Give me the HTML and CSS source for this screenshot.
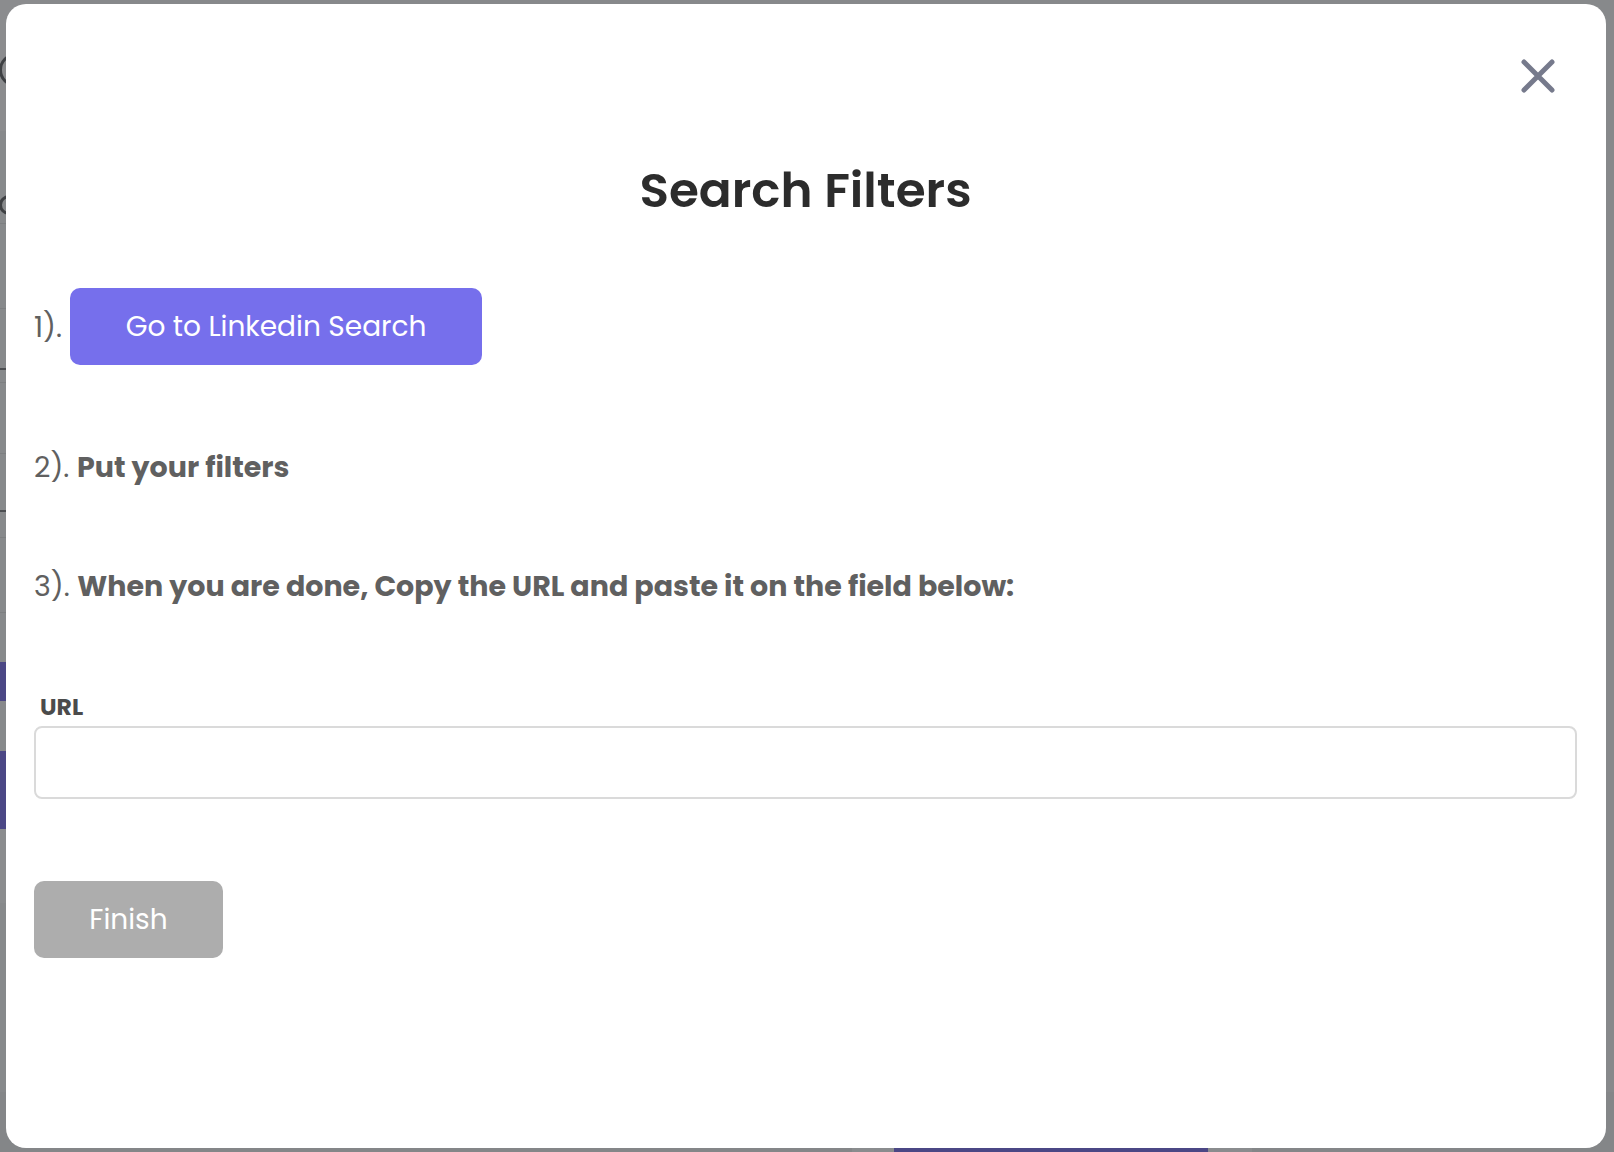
FILE: index.html
```html
<!DOCTYPE html>
<html lang="en">
<head>
    <meta charset="UTF-8">
    <meta name="viewport" content="width=device-width, initial-scale=1.0">
    <title>Search Filters</title>
    <link rel="stylesheet" href="styles.css">
</head>
<body>

    <div class="backdrop">
        <div class="backdrop-main">
            <div class="side-strip">
                <div class="strip-block strip-head"><span class="ring ring-big"></span></div>
                <div class="strip-block strip-b2"><span class="ring ring-small"></span></div>
                <div class="strip-block strip-b3"></div>
                <div class="strip-block strip-b4"></div>
                <div class="strip-block strip-b5"></div>
                <div class="strip-block strip-b6"></div>
                <div class="strip-block strip-b7"></div>
                <div class="strip-block strip-b8"></div>
                <div class="strip-block strip-b9"></div>
                <div class="strip-block strip-b9b"></div>
                <div class="strip-block strip-purple strip-p1"></div>
                <div class="strip-block strip-b10"></div>
                <div class="strip-block strip-purple strip-p2"></div>
                <div class="strip-block strip-b11"></div>
            </div>
        </div>
        <div class="backdrop-footer">
            <div class="footer-wrap"><div class="footer-btn"></div></div>
        </div>
    </div>

    <div class="modal">
        <button type="button" class="modal-close" aria-label="Close">
            <svg width="34" height="34" viewBox="0 0 34 34">
                <path d="M3 3 L31 31 M31 3 L3 31" stroke="#767a8c" stroke-width="5" stroke-linecap="round" fill="none"/>
            </svg>
        </button>

        <h2 class="modal-title">Search Filters</h2>

        <div class="step step-first">
            <span class="step-num">1).</span>
            <a class="btn btn-primary" href="#">Go to Linkedin Search</a>
        </div>

        <p class="step step-second"><span class="step-num">2).</span> <strong>Put your filters</strong></p>

        <p class="step step-third"><span class="step-num">3).</span> <strong>When you are done, Copy the URL and paste it on the field below:</strong></p>

        <label class="field-label" for="url">URL</label>
        <input class="field-input" type="text" id="url">

        <button type="button" class="btn btn-disabled" disabled>Finish</button>
    </div>

</body>
</html>
```

FILE: styles.css
```css
* {
    box-sizing: border-box;
}
body {
    margin: 0;
    font-family: "Poppins", Inter, "Noto Sans", sans-serif;
    background: #87898b;
    overflow: hidden;
}

/* page behind the overlay */
.backdrop {
    height: 100vh;
    display: flex;
    flex-direction: column;
}
.backdrop-main {
    flex: 1;
    display: flex;
}
.side-strip {
    width: 40px;
    display: flex;
    flex-direction: column;
}
.strip-block {
    border-bottom: 1px solid #7d7f81;
}
.strip-head {
    height: 131px;
    background: #8b8c8e;
    border-bottom: none;
    padding-top: 53px;
}
.ring {
    display: block;
    border: 3px solid #3e4043;
    border-radius: 50%;
}
.ring-big {
    width: 34px;
    height: 34px;
    margin-left: -1px;
}
.ring-small {
    width: 20px;
    height: 20px;
    margin-left: -1px;
}
.strip-b2 { height: 93px; padding-top: 64px; }
.strip-b3 { height: 85px; }
.strip-b4 { height: 61px; border-bottom: 2px solid #4c4e51; }
.strip-b5 { height: 13px; }
.strip-b6 { height: 71px; }
.strip-b7 { height: 58px; border-bottom: 2px solid #4c4e51; }
.strip-b8 { height: 26px; }
.strip-b9 { height: 75px; }
.strip-b9b { height: 49px; border-bottom: none; }
.strip-purple {
    background: #4b4785;
    border-bottom: none;
}
.strip-p1 { height: 39px; }
.strip-b10 { height: 50px; border-bottom: none; }
.strip-p2 { height: 78px; }
.strip-b11 { height: 74px; background: #8a8c8e; border-bottom: none; }

.backdrop-footer {
    height: 60px;
    background: #848688;
    display: flex;
}
.footer-wrap {
    margin-left: 852px;
    padding: 0 44px 0 42px;
    background: #8a8c8e;
}
.footer-btn {
    width: 314px;
    height: 100%;
    background: #4b4785;
}

/* modal */
.modal {
    position: absolute;
    left: 6px;
    top: 4px;
    width: 1600px;
    height: 1144px;
    background: #fff;
    border-radius: 20px;
    padding: 156px 29px 0 28px;
}
.modal-close {
    position: absolute;
    top: 55px;
    right: 51px;
    width: 34px;
    height: 34px;
    padding: 0;
    border: none;
    background: none;
    cursor: pointer;
}
.modal-close svg {
    display: block;
}
.modal-title {
    margin: 0 0 68px;
    text-align: center;
    font-size: 48.5px;
    line-height: 60px;
    font-weight: 600;
    color: #2c2c2c;
}
.step {
    margin: 0;
    font-size: 28.5px;
    line-height: 40px;
    color: #606060;
}
.step strong {
    font-weight: 700;
}
.step-first {
    display: flex;
    align-items: center;
    gap: 8px;
}
.step-second {
    margin-top: 82px;
}
.step-third {
    margin-top: 79px;
}
.step-num {
    font-weight: 400;
}
.btn {
    display: inline-flex;
    align-items: center;
    justify-content: center;
    height: 77px;
    border: none;
    border-radius: 10px;
    font-family: inherit;
    font-size: 28px;
    color: #fff;
    text-decoration: none;
}
.btn-primary {
    width: 412px;
    background: #766fec;
}
.btn-disabled {
    width: 189px;
    background: #adadad;
}
.field-label {
    display: block;
    margin: 88px 0 0 6px;
    font-size: 23.5px;
    line-height: 26px;
    font-weight: 700;
    color: #4b4b4b;
}
.field-input {
    display: block;
    width: 100%;
    height: 73px;
    margin: 6px 0 82px;
    border: 2px solid #dadada;
    border-radius: 8px;
    font-family: inherit;
    font-size: 22px;
    padding: 0 16px;
}
```
